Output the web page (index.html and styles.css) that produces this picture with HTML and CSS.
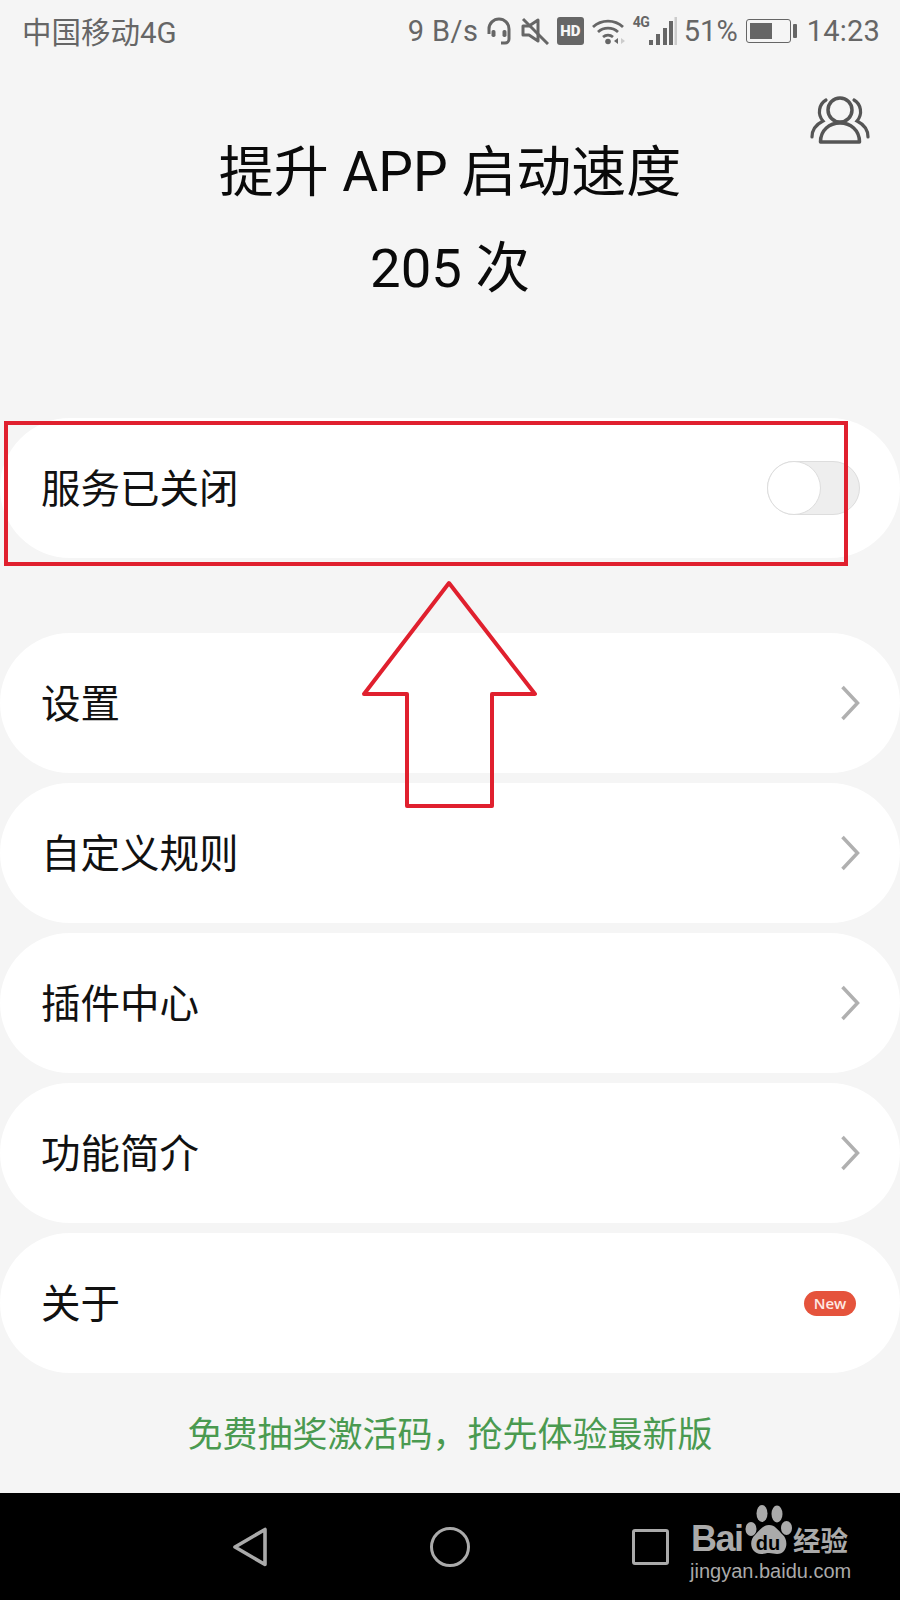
FILE: index.html
```html
<!DOCTYPE html>
<html lang="zh-CN">
<head>
<meta charset="utf-8">
<title>提升 APP 启动速度</title>
<link rel="stylesheet" href="styles.css">
</head>
<body>
<div class="screen">
  <header class="status">
    <span class="carrier">中国移动4G</span>
    <div class="status-right">
      <span class="speed">9 B/s</span>
      <svg class="ic headset" viewBox="0 0 26 28"><path d="M3 17V12a10 10 0 0 1 20 0v5M23 17v5a4 4 0 0 1-4 4h-4" fill="none" stroke="#666" stroke-width="3"/><rect x="5.500" y="13" width="4" height="7" rx="1.700" fill="#666"/><rect x="16.500" y="13" width="4" height="7" rx="1.700" fill="#666"/></svg>
      <svg class="ic mute" viewBox="0 0 28 28"><path d="M2 9h6l9-6v21l-9-6H2z" fill="none" stroke="#666" stroke-width="3" stroke-linejoin="round"/><path d="M2 2l25 25" stroke="#666" stroke-width="3"/></svg>
      <span class="hd">HD</span>
      <svg class="ic wifi" viewBox="0 0 34 28"><path d="M1 10a22 22 0 0 1 30 0M6 15a15 15 0 0 1 20 0M11 20a8 8 0 0 1 10 0" fill="none" stroke="#666" stroke-width="2.800"/><circle cx="16" cy="24.500" r="2.800" fill="#666"/><path d="M22 24l4-3v6z" fill="#666"/><path d="M29 21l4 3-4 3z" fill="#ccc"/></svg>
      <div class="signal">
        <span class="net">4G</span>
        <svg class="bars" viewBox="0 0 28 28"><rect x="0" y="23" width="4" height="5" fill="#666"/><rect x="7" y="17" width="4" height="11" fill="#666"/><rect x="14" y="11" width="4" height="17" fill="#666"/><rect x="20" y="4" width="4" height="24" fill="#666"/><rect x="25.500" y="0" width="2.500" height="28" fill="#ccc"/></svg>
      </div>
      <span class="pct">51%</span>
      <div class="battery"><div class="battery-body"><div class="battery-fill"></div></div><div class="battery-cap"></div></div>
      <span class="time">14:23</span>
    </div>
  </header>

  <section class="hero">
    <svg class="people" viewBox="0 0 60 50"><circle cx="30" cy="15" r="12" fill="none" stroke="#555" stroke-width="3.500"/><path d="M10.500 47c0-12 9-19 19.500-19s19.500 7 19.500 19z" fill="none" stroke="#555" stroke-width="3.500" stroke-linejoin="round"/><path d="M16 5C9 9 7 19 13 26 7 29 2 34 2 42M44 5c7 4 9 14 3 21 6 3 11 8 11 16" fill="none" stroke="#555" stroke-width="3.200" stroke-linecap="round"/></svg>
    <h1 class="title">提升 APP 启动速度</h1>
    <p class="count">205 次</p>
  </section>

  <main class="menu">
    <div class="row row-first">
      <span class="label">服务已关闭</span>
      <span class="toggle"><span class="knob"></span></span>
    </div>
    <div class="row"><span class="label">设置</span><svg class="chev" viewBox="0 0 20 36"><path d="M2.500 2l15 16-15 16" fill="none" stroke="#b0b0b0" stroke-width="3.500"/></svg></div>
    <div class="row"><span class="label">自定义规则</span><svg class="chev" viewBox="0 0 20 36"><path d="M2.500 2l15 16-15 16" fill="none" stroke="#b0b0b0" stroke-width="3.500"/></svg></div>
    <div class="row"><span class="label">插件中心</span><svg class="chev" viewBox="0 0 20 36"><path d="M2.500 2l15 16-15 16" fill="none" stroke="#b0b0b0" stroke-width="3.500"/></svg></div>
    <div class="row"><span class="label">功能简介</span><svg class="chev" viewBox="0 0 20 36"><path d="M2.500 2l15 16-15 16" fill="none" stroke="#b0b0b0" stroke-width="3.500"/></svg></div>
    <div class="row"><span class="label">关于</span><span class="badge">New</span></div>
  </main>

  <p class="promo">免费抽奖激活码，抢先体验最新版</p>

  <nav class="navbar">
    <svg class="nav-back" viewBox="0 0 36 40"><path d="M33 2.500v35L3 20z" fill="none" stroke="#aaa" stroke-width="3.600" stroke-linejoin="round"/></svg>
    <span class="nav-home"></span>
    <span class="nav-recent"></span>
  </nav>

  <div class="watermark">
    <span class="wm-bai">Bai</span>
    <svg class="wm-paw" viewBox="0 0 47 50"><ellipse cx="6" cy="24" rx="5.500" ry="7" fill="#aaa"/><ellipse cx="17" cy="8.500" rx="5.500" ry="8.500" fill="#aaa"/><ellipse cx="32" cy="9" rx="5.500" ry="8.500" fill="#aaa"/><ellipse cx="41.500" cy="23" rx="5.500" ry="7" fill="#aaa"/><path d="M24 20c6 0 9 5 14 10 6 6 4 19-6 19-3 0-5-1-8-1s-5 1-8 1C6 49 3 36 10 30c5-5 8-10 14-10z" fill="#aaa"/></svg>
    <span class="wm-du">du</span>
    <span class="wm-cn">经验</span>
    <span class="wm-url">jingyan.baidu.com</span>
  </div>

  <svg class="annotation" viewBox="0 0 900 1600">
    <rect x="6" y="423" width="840" height="141" fill="none" stroke="#e0202e" stroke-width="4"/>
    <path d="M449 583L535 694H492V806H407V694H364z" fill="none" stroke="#e0202e" stroke-width="4" stroke-linejoin="round"/>
  </svg>
</div>
</body>
</html>
```

FILE: styles.css
```css
* { box-sizing: border-box; }
html, body { margin: 0; padding: 0; }
body {
  width: 900px;
  height: 1600px;
  overflow: hidden;
  font-family: Roboto, "Noto Sans CJK SC", sans-serif;
  background: #f5f5f5;
}
.screen {
  position: relative;
  width: 900px;
  height: 1600px;
  display: flex;
  flex-direction: column;
  background: #f5f5f5;
}

/* status bar */
.status {
  height: 62px;
  padding: 0 20px 0 22px;
  display: flex;
  align-items: center;
  justify-content: space-between;
  color: #666;
  font-size: 29px;
}
.carrier { font-size: 29.500px; margin-bottom: 2px; }
.status-right { display: flex; align-items: center; }
.ic { display: block; }
.speed { width: 78px; letter-spacing: 0.4px; }
.headset { width: 26px; height: 28px; margin-right: 9px; }
.mute { width: 28px; height: 28px; margin-right: 8px; }
.hd {
  width: 27px;
  height: 28px;
  border-radius: 3px;
  background: #666;
  color: #f5f5f5;
  font-size: 15px;
  font-weight: 900;
  line-height: 28px;
  text-align: center;
  margin-right: 8px;
}
.wifi { width: 34px; height: 28px; margin-right: 7px; }
.signal { position: relative; width: 44px; height: 28px; margin-right: 7px; }
.net {
  position: absolute;
  left: 0;
  top: -2px;
  font-size: 14px;
  line-height: 14px;
  font-weight: 700;
  letter-spacing: -0.5px;
}
.bars { position: absolute; right: 0; top: 0; width: 28px; height: 28px; }
.pct { width: 62px; }
.battery { display: flex; align-items: center; margin-right: 10px; }
.battery-body {
  width: 45px;
  height: 24px;
  border: 1.500px solid #666;
  border-radius: 3px;
  padding: 3px;
}
.battery-fill { width: 22px; height: 100%; background: #666; }
.battery-cap { width: 4px; height: 14px; margin-left: 2px; background: #666; border-radius: 1px; }
.time { letter-spacing: 0.2px; }

/* heading */
.hero { position: relative; height: 356px; text-align: center; color: #0a0a0a; }
.people { position: absolute; left: 810px; top: 33px; width: 60px; height: 50px; }
.title { margin: 0; padding-top: 80px; font-size: 55px; line-height: 60px; font-weight: 400; }
.count { margin: 36px 0 0; font-size: 54.500px; line-height: 60px; }

/* menu */
.menu { display: flex; flex-direction: column; gap: 10px; }
.row {
  height: 140px;
  border-radius: 70px;
  background: #fff;
  padding: 0 40px 0 41px;
  display: flex;
  align-items: center;
  justify-content: space-between;
}
.row-first { margin-bottom: 65px; }
.label { font-size: 39.500px; color: #111; margin-bottom: 6px; }
.toggle {
  position: relative;
  display: block;
  width: 93px;
  height: 54px;
  border: 1.500px solid #ddd;
  border-radius: 27px;
  background: #eeeeee;
}
.knob {
  position: absolute;
  left: -1.500px;
  top: -1.500px;
  width: 54px;
  height: 54px;
  border: 1.500px solid #ddd;
  border-radius: 50%;
  background: #fff;
}
.chev { width: 20px; height: 36px; }
.badge {
  width: 52px;
  height: 25px;
  margin-right: 4px;
  border-radius: 13px;
  background: #e5533c;
  color: #fde9e4;
  font-family: "Open Sans", sans-serif;
  font-size: 15px;
  font-weight: 600;
  line-height: 25px;
  text-align: center;
}

/* promo */
.promo {
  margin: 38px 0 0;
  text-align: center;
  font-size: 35px;
  line-height: 50px;
  color: #4a9a50;
}

/* navigation */
.navbar { position: absolute; left: 0; right: 0; bottom: 0; height: 107px; background: #000; }
.nav-back { position: absolute; left: 232px; top: 34px; width: 36px; height: 40px; }
.nav-home {
  position: absolute;
  left: 430px;
  top: 34px;
  width: 40px;
  height: 40px;
  border: 3.600px solid #aaa;
  border-radius: 50%;
}
.nav-recent {
  position: absolute;
  left: 632px;
  top: 36px;
  width: 37px;
  height: 36px;
  border: 3.600px solid #aaa;
  border-radius: 3px;
}

/* watermark: a logo over the screenshot */
.watermark { position: absolute; left: 690px; top: 1505px; width: 162px; height: 78px; color: #aaa; }
.wm-bai {
  position: absolute;
  left: 1px;
  top: 12px;
  font-family: "Liberation Sans", sans-serif;
  font-size: 36px;
  line-height: 44px;
  font-weight: 700;
  letter-spacing: -1.5px;
}
.wm-paw { position: absolute; left: 55px; top: 0; width: 47px; height: 50px; }
.wm-du {
  position: absolute;
  left: 63px;
  top: 28px;
  width: 30px;
  color: #000;
  font-family: "Liberation Sans", sans-serif;
  font-size: 20px;
  line-height: 20px;
  font-weight: 700;
  text-align: center;
}
.wm-cn {
  position: absolute;
  left: 103px;
  top: 22px;
  font-size: 27.500px;
  line-height: 30px;
  font-weight: 700;
  white-space: nowrap;
}
.wm-url {
  position: absolute;
  left: 0;
  top: 54px;
  font-family: "Liberation Sans", sans-serif;
  font-size: 20px;
  line-height: 24px;
  white-space: nowrap;
}

/* red annotation on the screenshot */
.annotation { position: absolute; left: 0; top: 0; width: 900px; height: 1600px; pointer-events: none; }
```
